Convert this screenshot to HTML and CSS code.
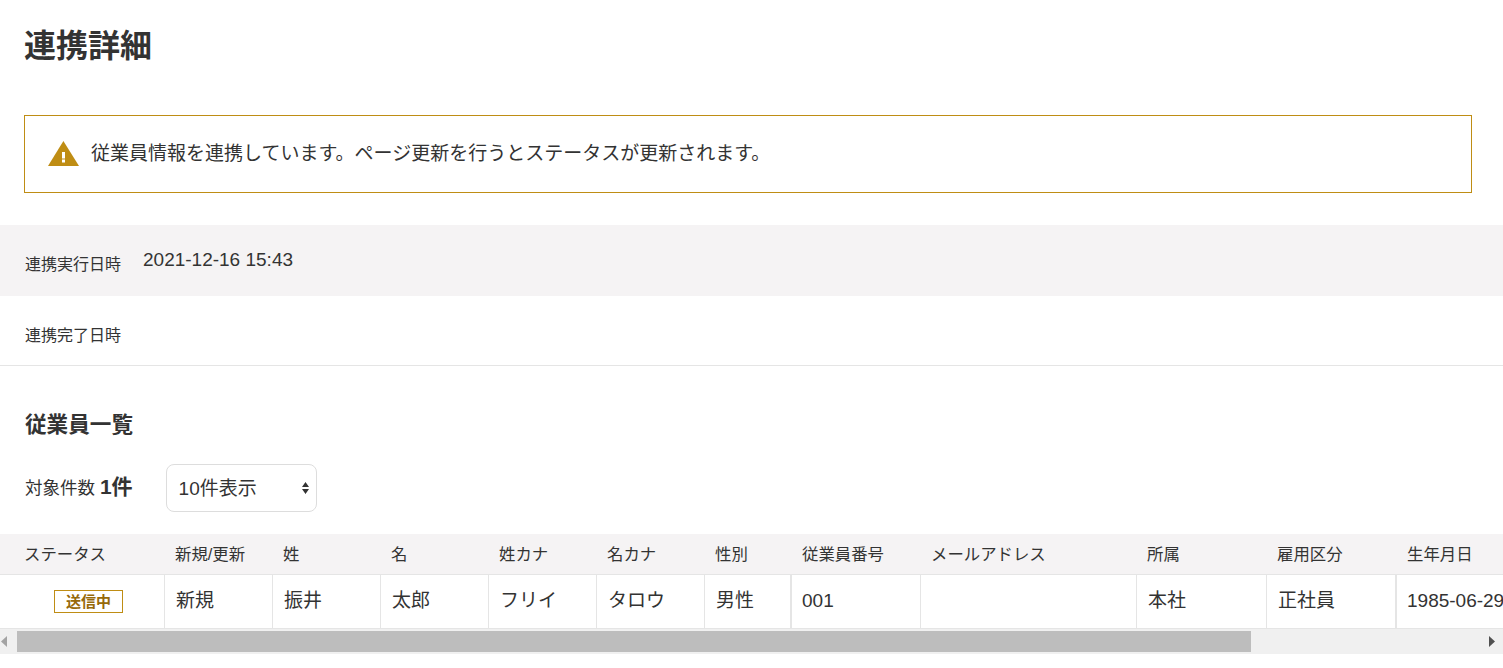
FILE: index.html
```html
<!DOCTYPE html>
<html lang="ja">
<head>
<meta charset="utf-8">
<title>連携詳細</title>
<link rel="stylesheet" href="styles.css">
</head>
<body>
<main class="page">
  <h1 class="title">連携詳細</h1>
  <div class="alert">
    <svg class="alert-icon" width="32" height="26" viewBox="0 0 32 26" aria-hidden="true">
      <path d="M15.4 0 L31 25 H0 Z" fill="#bf8d14"/>
      <rect x="14" y="11" width="3" height="6.5" fill="#fff"/>
      <rect x="14" y="18.5" width="3" height="3" fill="#fff"/>
    </svg>
    <span>従業員情報を連携しています。ページ更新を行うとステータスが更新されます。</span>
  </div>
  <dl class="info">
    <div class="info-row shaded">
      <dt>連携実行日時</dt>
      <dd>2021-12-16 15:43</dd>
    </div>
    <div class="info-row">
      <dt>連携完了日時</dt>
      <dd></dd>
    </div>
  </dl>
  <h2 class="subtitle">従業員一覧</h2>
  <div class="toolbar">
    <span class="count">対象件数 <strong>1件</strong></span>
    <select class="per-page">
      <option>10件表示</option>
      <option>20件表示</option>
      <option>50件表示</option>
    </select>
  </div>
  <div class="table-scroll">
    <table class="employees">
      <colgroup>
        <col class="c164"><col class="c108"><col class="c108"><col class="c108"><col class="c108"><col class="c108">
        <col class="c86"><col class="c130"><col class="c216"><col class="c130"><col class="c129"><col class="c394">
      </colgroup>
      <thead>
        <tr>
          <th>ステータス</th><th>新規/更新</th><th>姓</th><th>名</th><th>姓カナ</th><th>名カナ</th>
          <th>性別</th><th class="thick">従業員番号</th><th>メールアドレス</th><th>所属</th><th>雇用区分</th><th class="thick">生年月日</th>
        </tr>
      </thead>
      <tbody>
        <tr>
          <td class="status"><span class="badge">送信中</span></td>
          <td>新規</td><td>振井</td><td>太郎</td><td>フリイ</td><td>タロウ</td><td>男性</td>
          <td class="thick">001</td><td></td><td>本社</td><td>正社員</td><td class="thick">1985-06-29</td>
        </tr>
      </tbody>
    </table>
  </div>
  <div class="scrollbar" aria-hidden="true">
    <span class="scroll-btn prev">
      <svg width="6" height="11" viewBox="0 0 6 11"><path d="M6 0V11L0 5.5Z" fill="#a3a3a3"/></svg>
    </span>
    <div class="scroll-track"><div class="scroll-thumb"></div></div>
    <span class="scroll-btn next">
      <svg width="6" height="11" viewBox="0 0 6 11"><path d="M0 0V11L6 5.5Z" fill="#505050"/></svg>
    </span>
  </div>
</main>
</body>
</html>
```
FILE: styles.css
```css
* { box-sizing: border-box; }
html, body { margin: 0; padding: 0; background: #fff; }
body {
  font-family: "Liberation Sans", "Noto Sans CJK JP", sans-serif;
  color: #333;
  overflow: hidden;
}
.page { padding-bottom: 14px; }
.title {
  margin: 0;
  padding: 24px 24px 0;
  font-size: 32px;
  line-height: 44px;
  font-weight: 700;
}
.alert {
  display: flex;
  align-items: center;
  gap: 11px;
  height: 78px;
  margin: 47px 31px 32px 24px;
  padding-left: 23px;
  border: 1px solid #bf8d14;
  font-size: 19px;
  line-height: 26px;
}
.alert-icon { flex: none; }
.info { margin: 0; }
.info-row {
  display: flex;
  height: 70px;
  padding: 0 25px;
}
.info-row + .info-row { height: 70px; border-bottom: 1px solid #e5e5e5; }
.info-row.shaded { height: 71px; background: #f5f3f4; }
.info-row dt {
  width: 118px;
  padding-top: 30px;
  font-size: 16px;
  line-height: 20px;
}
.info-row dd {
  margin: 0;
  padding-top: 23px;
  font-size: 19px;
  line-height: 24px;
}
.subtitle {
  margin: 0;
  padding: 44px 25px 0;
  font-size: 21.6px;
  line-height: 30px;
  font-weight: 700;
}
.toolbar {
  display: flex;
  align-items: center;
  gap: 33px;
  margin-top: 24px;
  padding-left: 25px;
  height: 48px;
  font-size: 17.5px;
}
.count { line-height: 40px; padding-bottom: 2px; }
.count strong { font-size: 21px; font-weight: 700; }
.per-page {
  appearance: none;
  -webkit-appearance: none;
  width: 151px;
  height: 48px;
  padding: 0 0 0 12px;
  border: 1px solid #ddd;
  border-radius: 8px;
  color: #333;
  font: inherit;
  font-size: 19px;
  background: #fff url("data:image/svg+xml,%3Csvg xmlns='http://www.w3.org/2000/svg' width='7' height='12'%3E%3Cpath d='M3.5 0L7 5H0ZM3.5 12L0 7H7Z' fill='%23333'/%3E%3C/svg%3E") no-repeat 135px 17px;
}
.table-scroll {
  margin-top: 22px;
  overflow: hidden;
}
.employees {
  table-layout: fixed;
  width: 1789px;
  border-collapse: separate;
  border-spacing: 0;
}
.c86 { width: 86px; }
.c108 { width: 108px; }
.c129 { width: 129px; }
.c130 { width: 130px; }
.c164 { width: 164px; }
.c216 { width: 216px; }
.c394 { width: 394px; }
.employees th {
  height: 41px;
  padding: 0 0 0 11px;
  background: #f5f3f4;
  border-bottom: 1px solid #e5e5e5;
  font-size: 16.4px;
  line-height: 22px;
  font-weight: 400;
  text-align: left;
}
.employees th:first-child { padding-left: 24px; }
.employees th.thick { padding-left: 12px; }
.employees td {
  height: 54px;
  padding: 0 0 2px 11px;
  border-left: 1px solid #e5e5e5;
  border-bottom: 1px solid #e5e5e5;
  font-size: 19px;
  line-height: 24px;
}
.employees td.status { border-left: 0; padding: 0 0 2px 13px; text-align: center; }
.employees td.thick { border-left-width: 2px; padding-left: 10px; }
.badge {
  display: inline-block;
  width: 69px;
  height: 23px;
  border: 1px solid #bf8d14;
  color: #96690a;
  font-size: 15px;
  font-weight: 700;
  line-height: 21px;
  text-align: center;
  vertical-align: middle;
}
.scrollbar {
  display: flex;
  height: 25px;
  background: #f0f0f0;
}
.scroll-btn {
  flex: none;
  width: 17px;
  display: flex;
  align-items: center;
}
.scroll-btn.prev { padding-left: 1px; }
.scroll-btn.next { padding-left: 3px; }
.scroll-track {
  flex: 1;
  padding: 2px 0;
}
.scroll-thumb {
  width: 84%;
  height: 100%;
  background: #bdbdbd;
}
```
